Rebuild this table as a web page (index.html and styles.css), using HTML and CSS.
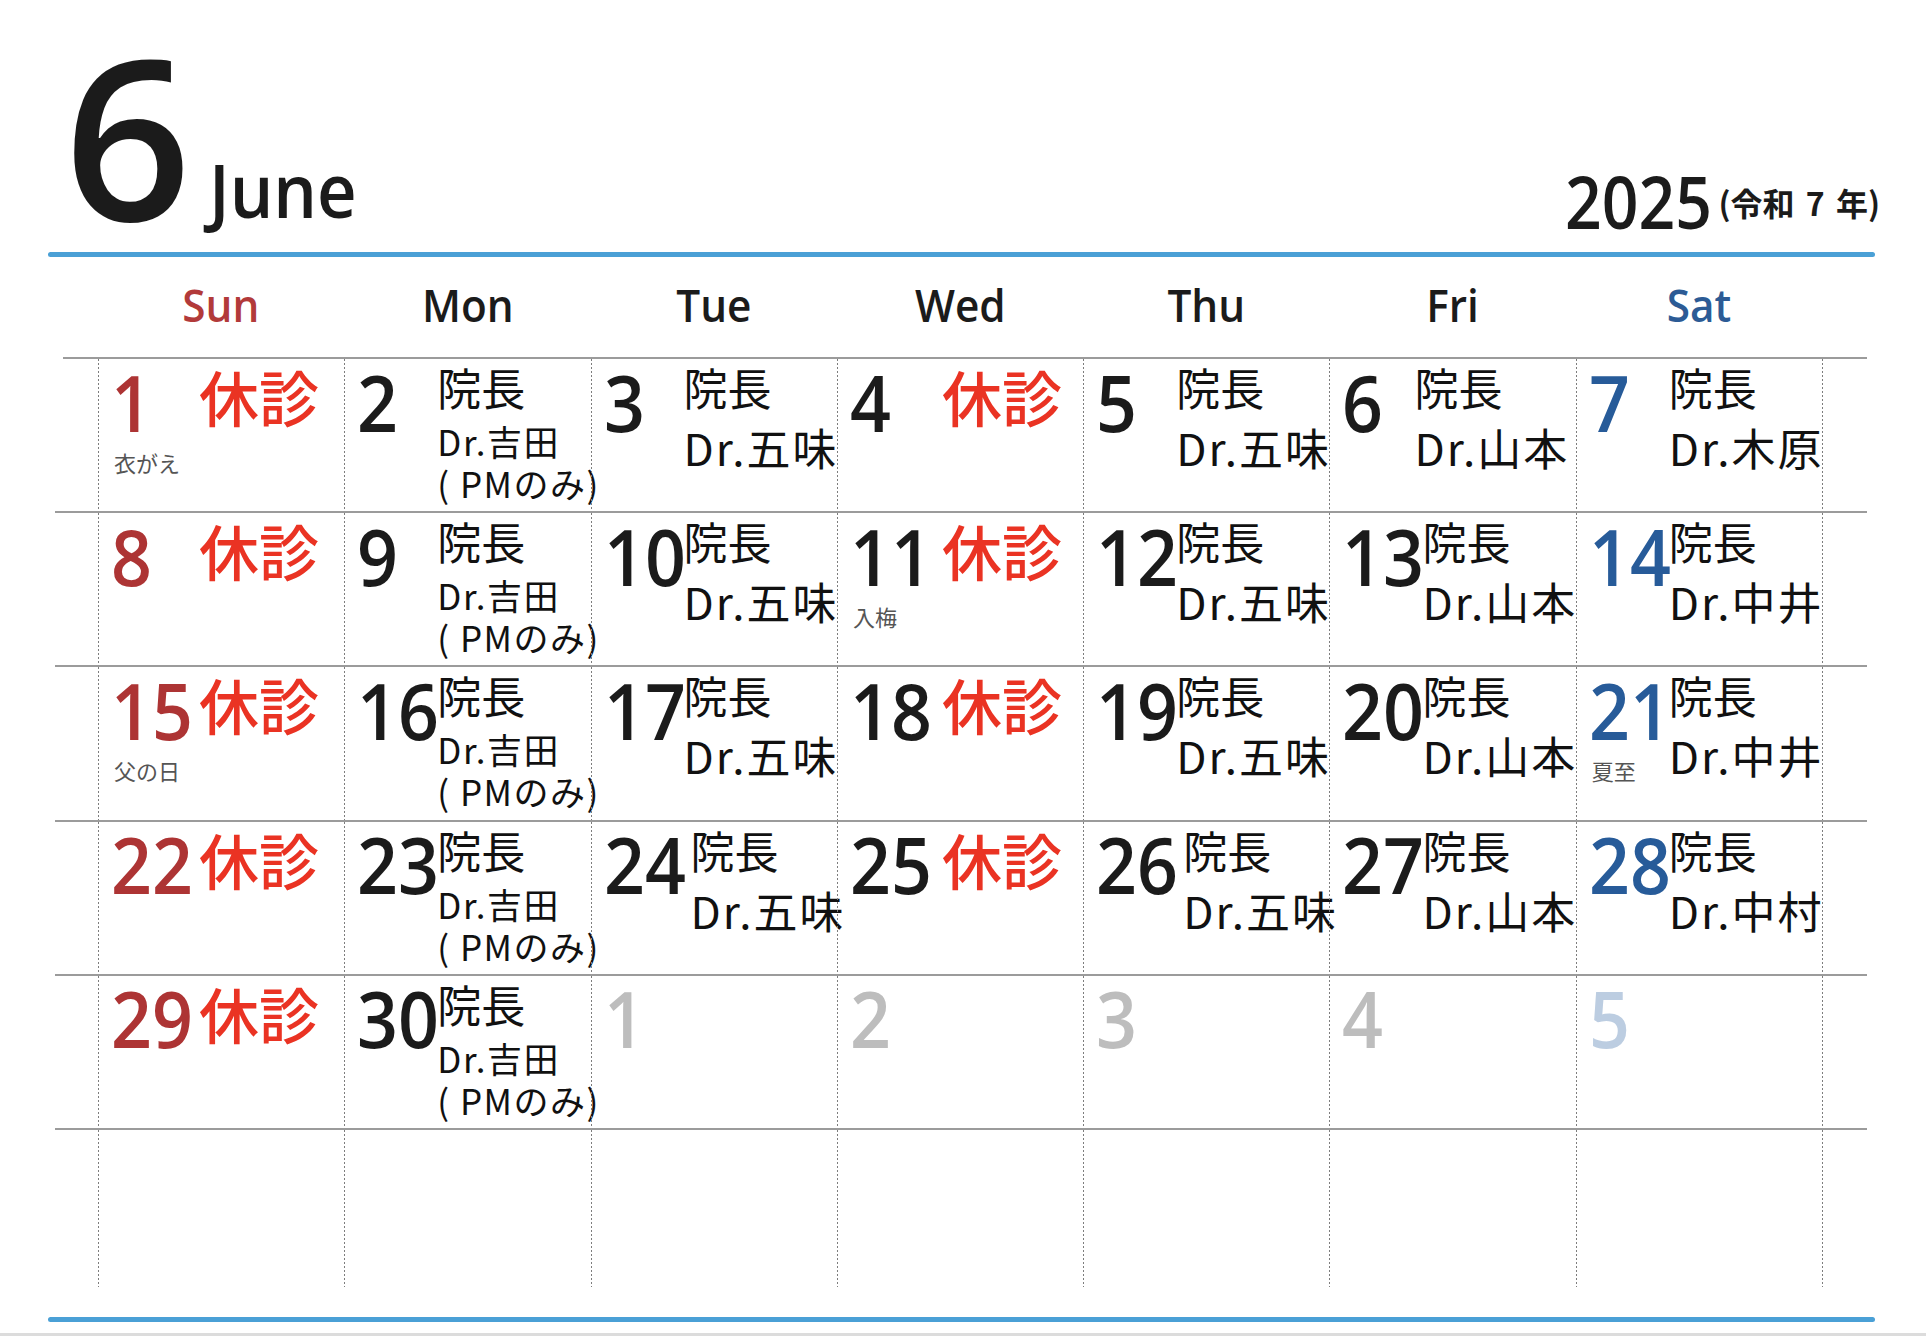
FILE: index.html
```html
<!DOCTYPE html>
<html lang="ja">
<head>
<meta charset="utf-8">
<title>2025年6月 診療カレンダー</title>
<link rel="stylesheet" href="styles.css">
</head>
<body>
<div class="page">
  <header class="title">
    <div class="month">
      <span class="month-num">6</span>
      <span class="month-en">June</span>
    </div>
    <div class="year-box">
      <span class="year">2025</span>
      <span class="era">(令和 7 年)</span>
    </div>
  </header>
  <div class="rule"></div>

  <div class="cal">
    <div class="dow">
      <div class="edge"></div>
      <div class="dname sun"><span>Sun</span></div>
      <div class="dname"><span>Mon</span></div>
      <div class="dname"><span>Tue</span></div>
      <div class="dname"><span>Wed</span></div>
      <div class="dname"><span>Thu</span></div>
      <div class="dname"><span>Fri</span></div>
      <div class="dname sat"><span>Sat</span></div>
      <div class="edge"></div>
    </div>

    <div class="week first">
      <div class="edge"></div>
      <div class="day sun">
        <div class="num-col"><span class="num">1</span><span class="note">衣がえ</span></div>
        <div class="closed">休診</div>
      </div>
      <div class="day">
        <div class="num-col"><span class="num">2</span></div>
        <div class="txt mon"><span class="who">院長</span><span class="dr">Dr.吉田</span><span class="dr">( PMのみ)</span></div>
      </div>
      <div class="day">
        <div class="num-col"><span class="num">3</span></div>
        <div class="txt"><span class="who">院長</span><span class="dr">Dr.五味</span></div>
      </div>
      <div class="day wed">
        <div class="num-col"><span class="num">4</span></div>
        <div class="closed">休診</div>
      </div>
      <div class="day">
        <div class="num-col"><span class="num">5</span></div>
        <div class="txt"><span class="who">院長</span><span class="dr">Dr.五味</span></div>
      </div>
      <div class="day">
        <div class="num-col"><span class="num">6</span></div>
        <div class="txt shift-l"><span class="who">院長</span><span class="dr">Dr.山本</span></div>
      </div>
      <div class="day sat">
        <div class="num-col"><span class="num">7</span></div>
        <div class="txt"><span class="who">院長</span><span class="dr">Dr.木原</span></div>
      </div>
      <div class="edge end"></div>
    </div>

    <div class="week">
      <div class="edge"></div>
      <div class="day sun">
        <div class="num-col"><span class="num">8</span></div>
        <div class="closed">休診</div>
      </div>
      <div class="day">
        <div class="num-col"><span class="num">9</span></div>
        <div class="txt mon"><span class="who">院長</span><span class="dr">Dr.吉田</span><span class="dr">( PMのみ)</span></div>
      </div>
      <div class="day">
        <div class="num-col"><span class="num">10</span></div>
        <div class="txt"><span class="who">院長</span><span class="dr">Dr.五味</span></div>
      </div>
      <div class="day wed">
        <div class="num-col"><span class="num">11</span><span class="note">入梅</span></div>
        <div class="closed">休診</div>
      </div>
      <div class="day">
        <div class="num-col"><span class="num">12</span></div>
        <div class="txt"><span class="who">院長</span><span class="dr">Dr.五味</span></div>
      </div>
      <div class="day">
        <div class="num-col"><span class="num">13</span></div>
        <div class="txt"><span class="who">院長</span><span class="dr">Dr.山本</span></div>
      </div>
      <div class="day sat">
        <div class="num-col"><span class="num">14</span></div>
        <div class="txt"><span class="who">院長</span><span class="dr">Dr.中井</span></div>
      </div>
      <div class="edge end"></div>
    </div>

    <div class="week">
      <div class="edge"></div>
      <div class="day sun">
        <div class="num-col"><span class="num">15</span><span class="note">父の日</span></div>
        <div class="closed">休診</div>
      </div>
      <div class="day">
        <div class="num-col"><span class="num">16</span></div>
        <div class="txt mon"><span class="who">院長</span><span class="dr">Dr.吉田</span><span class="dr">( PMのみ)</span></div>
      </div>
      <div class="day">
        <div class="num-col"><span class="num">17</span></div>
        <div class="txt"><span class="who">院長</span><span class="dr">Dr.五味</span></div>
      </div>
      <div class="day wed">
        <div class="num-col"><span class="num">18</span></div>
        <div class="closed">休診</div>
      </div>
      <div class="day">
        <div class="num-col"><span class="num">19</span></div>
        <div class="txt"><span class="who">院長</span><span class="dr">Dr.五味</span></div>
      </div>
      <div class="day">
        <div class="num-col"><span class="num">20</span></div>
        <div class="txt"><span class="who">院長</span><span class="dr">Dr.山本</span></div>
      </div>
      <div class="day sat">
        <div class="num-col"><span class="num">21</span><span class="note">夏至</span></div>
        <div class="txt"><span class="who">院長</span><span class="dr">Dr.中井</span></div>
      </div>
      <div class="edge end"></div>
    </div>

    <div class="week">
      <div class="edge"></div>
      <div class="day sun">
        <div class="num-col"><span class="num">22</span></div>
        <div class="closed">休診</div>
      </div>
      <div class="day">
        <div class="num-col"><span class="num">23</span></div>
        <div class="txt mon"><span class="who">院長</span><span class="dr">Dr.吉田</span><span class="dr">( PMのみ)</span></div>
      </div>
      <div class="day">
        <div class="num-col"><span class="num">24</span></div>
        <div class="txt shift-r"><span class="who">院長</span><span class="dr">Dr.五味</span></div>
      </div>
      <div class="day wed">
        <div class="num-col"><span class="num">25</span></div>
        <div class="closed">休診</div>
      </div>
      <div class="day">
        <div class="num-col"><span class="num">26</span></div>
        <div class="txt shift-r"><span class="who">院長</span><span class="dr">Dr.五味</span></div>
      </div>
      <div class="day">
        <div class="num-col"><span class="num">27</span></div>
        <div class="txt"><span class="who">院長</span><span class="dr">Dr.山本</span></div>
      </div>
      <div class="day sat">
        <div class="num-col"><span class="num">28</span></div>
        <div class="txt"><span class="who">院長</span><span class="dr">Dr.中村</span></div>
      </div>
      <div class="edge end"></div>
    </div>

    <div class="week">
      <div class="edge"></div>
      <div class="day sun">
        <div class="num-col"><span class="num">29</span></div>
        <div class="closed">休診</div>
      </div>
      <div class="day">
        <div class="num-col"><span class="num">30</span></div>
        <div class="txt mon"><span class="who">院長</span><span class="dr">Dr.吉田</span><span class="dr">( PMのみ)</span></div>
      </div>
      <div class="day next">
        <div class="num-col"><span class="num">1</span></div>
      </div>
      <div class="day next">
        <div class="num-col"><span class="num">2</span></div>
      </div>
      <div class="day next">
        <div class="num-col"><span class="num">3</span></div>
      </div>
      <div class="day next">
        <div class="num-col"><span class="num">4</span></div>
      </div>
      <div class="day next sat">
        <div class="num-col"><span class="num">5</span></div>
      </div>
      <div class="edge end"></div>
    </div>

    <div class="week blank">
      <div class="edge"></div>
      <div class="day"></div>
      <div class="day"></div>
      <div class="day"></div>
      <div class="day"></div>
      <div class="day"></div>
      <div class="day"></div>
      <div class="day"></div>
      <div class="edge end"></div>
    </div>
  </div>

  <div class="rule bottom"></div>
  <div class="chrome"></div>
</div>
</body>
</html>
```

FILE: styles.css
```css
* { box-sizing: border-box; margin: 0; padding: 0; }

html, body { background: #fff; }

body {
  width: 1926px;
  height: 1336px;
  overflow: hidden;
  font-family: "Noto Sans CJK JP", "Noto Sans", sans-serif;
  color: #1b1b1b;
}

.page {
  width: 1926px;
  height: 1336px;
  display: flex;
  flex-direction: column;
}

/* ---------- title ---------- */
.title {
  height: 252px;
  flex: none;
  display: flex;
  justify-content: space-between;
  align-items: flex-end;
  padding: 0 46px 0 64px;
}

.month { display: flex; align-items: flex-end; }

.month-num {
  font: 600 223px/223px "Open Sans", "Liberation Sans", sans-serif;
  margin-bottom: 6px;
}

.month-en {
  display: inline-block;
  font: 600 74px/74px "Open Sans", "Liberation Sans", sans-serif;
  margin: 0 0 25px 17px;
  transform: scaleX(.93);
  transform-origin: left bottom;
}

.year-box { display: flex; align-items: flex-end; }

.year {
  display: inline-block;
  font: 600 73px/73px "Open Sans", "Liberation Sans", sans-serif;
  transform: scaleX(.88);
  transform-origin: right bottom;
  margin: 0 6px 15px 0;
}

.era {
  font: 700 32px/32px "Noto Sans CJK JP", sans-serif;
  word-spacing: 4px;
  margin-bottom: 34px;
}

.rule {
  flex: none;
  height: 5px;
  margin: 0 51px 0 48px;
  background: #4aa0d6;
  border-radius: 3px;
}

.rule.bottom { margin-top: 30px; }

.chrome {
  margin-top: auto;
  height: 3px;
  background: #dcdcdc;
}

/* ---------- calendar ---------- */
.cal {
  flex: none;
  margin-left: 55px;
  width: 1812px;
}

.dow, .week {
  display: grid;
  grid-template-columns: 43px repeat(7, 246.3px) 45px;
}

.dow { height: 100px; }

.dname {
  display: flex;
  justify-content: center;
  font: 600 46px/94px "Open Sans", "Liberation Sans", sans-serif;
  color: #1b1b1b;
}

.dname span { display: inline-block; transform: scaleX(.92); }
.dname.sun { color: #b23a3a; }
.dname.sat { color: #2c5b95; }

.week {
  height: 154.2px;
  border-top: 2px solid #9b9b9b;
}

.week.first {
  border-top-color: transparent;
  background: linear-gradient(#9b9b9b, #9b9b9b) 8px 0 / calc(100% - 8px) 2px no-repeat border-box;
}

.week.blank { height: 159px; }

.day,
.edge.end {
  background: linear-gradient(to bottom, #7d7d7d 0 2px, transparent 2px 4px) 0 0 / 1px 4px repeat-y;
}

.day {
  display: flex;
  min-width: 0;
}

.num-col {
  flex: none;
  width: 93px;
  padding-left: 13px;
  display: flex;
  flex-direction: column;
}

.num {
  display: block;
  font: 600 77px/77px "Open Sans", "Liberation Sans", sans-serif;
  margin-top: 4.6px;
  transform: scaleX(.93);
  transform-origin: left center;
  white-space: nowrap;
  color: #1b1b1b;
}

.sun .num { color: #ad3434; }
.sat .num { color: #275b99; }
.next .num { color: #bdbdbd; }
.next.sat .num { color: #bccde1; }

.note {
  display: block;
  font: 400 22px/22px "Noto Sans CJK JP", sans-serif;
  color: #555;
  margin-top: 10px;
  padding-left: 3px;
  white-space: nowrap;
}

.txt {
  display: flex;
  flex-direction: column;
  margin-top: -2px;
  white-space: nowrap;
  color: #111;
}

.who, .dr {
  font: 400 44px/60px "Noto Sans CJK JP", sans-serif;
}

.dr { letter-spacing: 2px; }

.mon .dr { font-size: 35px; line-height: 42px; letter-spacing: 1.5px; }
.mon .who + .dr { margin-top: 3px; }

.shift-l { margin-left: -8px; }
.shift-r { margin-left: 7px; }

.closed {
  font: 500 60px/60px "Noto Sans CJK JP", sans-serif;
  color: #ea3323;
  margin-top: 7px;
  padding-left: 8px;
  white-space: nowrap;
}

.wed .closed { padding-left: 12px; }
```
